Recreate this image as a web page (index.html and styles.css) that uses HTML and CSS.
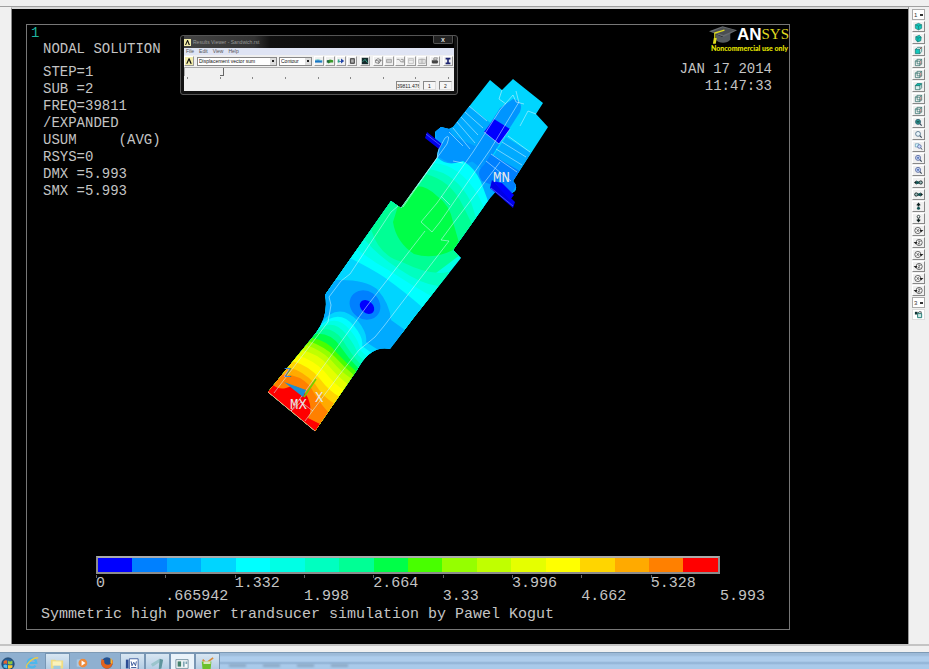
FILE: index.html
```html
<!DOCTYPE html>
<html lang="en">
<head>
    <meta charset="UTF-8">
    <meta name="viewport" content="width=device-width, initial-scale=1.0">
    <title>ANSYS - Nodal Solution</title>
    <link rel="stylesheet" href="styles.css">
</head>
<body>
    <svg class="symbols" aria-hidden="true">
        <symbol id="cube" viewBox="0 0 12 10"><path d="M2.5 3 6 1.5 9.5 3v4L6 8.800 2.500 7z" fill="#12c8bd" stroke="#16766f" stroke-width=".7"/><path d="M2.500 3 6 4.500 9.500 3M6 4.500v4" fill="none" stroke="#16766f" stroke-width=".7"/></symbol>
        <symbol id="cube-tilt" viewBox="0 0 12 10"><path d="M3 3 7 1.500 9 3.500 8.500 7.500 5 8.800 3 6.500z" fill="#12c8bd" stroke="#16766f" stroke-width=".8"/><path d="M3 3 5.500 4.500 9 3.500M5.500 4.500 5 8.500" fill="none" stroke="#16766f" stroke-width=".7"/></symbol>
        <symbol id="box-front" viewBox="0 0 12 10"><path d="M3 3.500 5 1.500h4.500v4.500L7.500 8.500z" fill="#fff" stroke="#16766f" stroke-width=".8"/><path d="M2.500 3.500h5v5h-5z" fill="#12c8bd" stroke="#16766f" stroke-width=".8"/><path d="M7.500 3.500l2-2" stroke="#b33"/></symbol>
        <symbol id="box-wire" viewBox="0 0 12 10"><path d="M2.500 3.500h5v5h-5zM2.500 3.500l2-2h5v5l-2 2M7.500 3.500l2-2M4.500 2v4.500h5" fill="none" stroke="#2c6d69" stroke-width=".8"/><path d="M8.500 3v4" stroke="#c77" stroke-width=".8"/></symbol>
        <symbol id="box-top" viewBox="0 0 12 10"><path d="M2.500 4h5v4.500h-5zM7.500 4l2-2v4.500l-2 2" fill="#d8eeec" stroke="#2c6d69" stroke-width=".8"/><path d="M2.500 4l2-2.300h5L7.500 4z" fill="#12b8ae" stroke="#16766f" stroke-width=".8"/></symbol>
        <symbol id="zoom" viewBox="0 0 12 10"><circle cx="5.500" cy="4.300" r="2.700" fill="#e8f4fa" stroke="#4a6c86" stroke-width=".9"/><path d="M7.500 6.300 9.500 8.500" stroke="#345" stroke-width="1.200"/></symbol>
        <symbol id="zoom-fit" viewBox="0 0 12 10"><circle cx="5.500" cy="4.300" r="2.800" fill="#2b9690" stroke="#345d70" stroke-width=".9"/><path d="M7.500 6.300 9.500 8.500" stroke="#345" stroke-width="1.200"/><path d="M4 4.300h3" stroke="#133"/></symbol>
        <symbol id="zoom-in" viewBox="0 0 12 10"><circle cx="5.500" cy="4.300" r="2.800" fill="#dfeaff" stroke="#4a5c96" stroke-width=".9"/><path d="M7.500 6.300 9.500 8.500" stroke="#345" stroke-width="1.200"/><path d="M4 4.300h3M5.500 2.800v3" stroke="#35a" stroke-width=".9"/></symbol>
        <symbol id="zoom-win" viewBox="0 0 12 10"><path d="M2.500 2h4v3.500h-4z" fill="#dff" stroke="#58a" stroke-width=".7"/><circle cx="7" cy="5" r="2" fill="#cdf" stroke="#4a5c96" stroke-width=".8"/><path d="M8.500 6.500 10 8.500" stroke="#345"/></symbol>
        <symbol id="pan-left" viewBox="0 0 12 10"><path d="M1 5 4 2.500v5z" fill="#122"/><circle cx="5" cy="5" r="1.800" fill="#155"/><circle cx="8.500" cy="5" r="1.800" fill="#9bb" stroke="#122"/></symbol>
        <symbol id="pan-right" viewBox="0 0 12 10"><path d="M11 5 8 2.500v5z" fill="#122"/><circle cx="7" cy="5" r="1.800" fill="#155"/><circle cx="3.500" cy="5" r="1.800" fill="#9bb" stroke="#122"/></symbol>
        <symbol id="pan-up" viewBox="0 0 12 10"><path d="M6 .5 8.500 3.500h-5z" fill="#122"/><path d="M5 3h2v2H5z" fill="#122"/><circle cx="6" cy="7" r="1.700" fill="#155"/></symbol>
        <symbol id="pan-down" viewBox="0 0 12 10"><path d="M6 9.500 8.500 6.500h-5z" fill="#122"/><path d="M5 5h2v2H5z" fill="#122"/><circle cx="6" cy="3" r="1.500" fill="#fff" stroke="#122" stroke-width=".9"/></symbol>
        <symbol id="spin-right" viewBox="0 0 12 10"><circle cx="5.300" cy="5" r="3.400" fill="#fff" stroke="#444" stroke-width=".9"/><path d="M4 3.500 6.500 6.500M6.500 3.500 4 6.500" stroke="#333" stroke-width=".8"/><path d="M7 4.500h4.500L9 7z" fill="#222"/></symbol>
        <symbol id="spin-left" viewBox="0 0 12 10"><circle cx="6.700" cy="5" r="3.400" fill="#fff" stroke="#444" stroke-width=".9"/><path d="M5.500 3.500h2.500L5.500 6.500H8" fill="none" stroke="#333" stroke-width=".8"/><path d="M.5 4.500H5L3 7z" fill="#222"/></symbol>
        <symbol id="dynamic" viewBox="0 0 12 10"><path d="M2 2h3v3H2z" fill="#133"/><path d="M5 4h4.500v4.500H5z" fill="#cfe6e4" stroke="#16766f"/><path d="M5 4l1.500-2H9v2" fill="none" stroke="#455"/></symbol>
        <symbol id="logo-a" viewBox="0 0 10 10"><path d="M0 0h10v10H0z" fill="#f3edaa"/><path d="M1.500 8.500 4.500 1.500h1.200L8.500 8.500H6.700L5 4 3 8.500z" fill="#111"/></symbol>
    </svg>

    <div class="top-strip"></div>

    <div class="workspace">
        <main class="graphics">
            <section class="plot">
                <header class="plot-head">
                    <div class="solution">
                        <div class="plot-number">1</div>
                        <h1>NODAL SOLUTION</h1>
                        <pre class="readout">STEP=1
SUB =2
FREQ=39811
/EXPANDED
USUM     (AVG)
RSYS=0
DMX =5.993
SMX =5.993</pre>
                    </div>
                    <div class="stamp">
                        <div class="brand">
                            <svg class="cap" viewBox="0 0 30 18">
                                <path d="M7 8v6c3 4 12 4 15 0V7l-8 4z" fill="#555b60"/>
                                <path d="M0 5 14 0 29 4 15 11z" fill="#686c70"/>
                                <path d="M3 6l11-5 13 3-12 5z" fill="#4a4e52"/>
                                <path d="M16 4 6 7v9" fill="none" stroke="#e0dc20" stroke-width="1.300"/>
                                <path d="M5 12h3l-1 6H4z" fill="#e0dc20"/>
                            </svg>
                            <span class="brand-an">AN</span><span class="brand-sys">SYS</span>
                        </div>
                        <div class="brand-note">Noncommercial use only</div>
                        <div class="date">JAN 17 2014<br>11:47:33</div>
                    </div>
                </header>

                <svg class="model" viewBox="260 70 300 370" role="img" aria-label="Displacement contour of the transducer">
                    <defs>
                        <clipPath id="body">
                            <path d="M490 80 502 90 513 79 543 103 536 114 548 127 513 181Q518 186 515 191L509 195 497 190 490 198 453 250 461 258 415 316 390 349Q370 345 357 370L315 431 268 392 316 333Q329 315 325 295L391 201 401 208 437 158Q437 150 441 146L435 138V132L441 127 449 129 453 127z"/>
                        </clipPath>
                    </defs>
                    <g clip-path="url(#body)">
                        <path d="M260 70h300v370H260z" fill="#00d5ff"/>
                        <!-- upper stack -->
                        <path d="M469 106 493 125 476 150 530 190 490 205 440 172 425 140 445 120z" fill="#00aaff"/>
                        <path d="M506 137 531 153 510 187 485 168z" fill="#00aaff"/>
                        <path d="M513 99Q524 101 520 112L483 170 468 158 500 108z" fill="#0095ff"/>
                        <path d="M435 125 449 128 453 136 484 150 474 161Q455 169 439 157z" fill="#0095ff"/>
                        <path d="M491 154 523 173 512 193 482 181Q475 172 484 165z" fill="#007fff"/>
                        <path d="M494 119 510 129 499 144 484 132z" fill="#00f"/>
                        <!-- middle -->
                        <path d="M438 158Q447 167 463 161 475 168 481 182L488 201 420 316 340 270 380 170z" fill="#0ff"/>
                        <path d="M434 163Q460 165 478 195L490 220 420 310 350 262 380 170z" fill="#00ffe5"/>
                        <path d="M429 169Q456 173 471 202L480 230 400 300 340 257 380 170z" fill="#00ffc0"/>
                        <path d="M425 174Q451 180 463 206L480 240 400 300 340 257 380 170z" fill="#00ff95"/>
                        <path d="M402 193Q419 178 437 196 450 205 453 222L460 246Q437 261 414 254 396 242 393 222z" fill="#00ff48"/>
                        <path d="M371 229Q379 256 402 262 430 276 448 272L470 290 410 340 320 290z" fill="#00ffc0"/>
                        <path d="M364 239Q378 256 399 269 421 284 438 286L415 340 320 290z" fill="#00ffe5"/>
                        <path d="M357 249Q373 262 390 271 411 285 431 296L415 340 320 290z" fill="#0ff"/>
                        <path d="M350 258Q372 269 384 277 405 292 422 307L410 350 310 310z" fill="#00d5ff"/>
                        <path d="M336 280Q364 279 377 289 390 304 391 320L405 330 385 360 310 340 320 290z" fill="#00aaff"/>
                        <ellipse cx="365" cy="305" rx="16" ry="14" transform="rotate(35 365 305)" fill="#0080ff"/>
                        <ellipse cx="367" cy="307" rx="8" ry="6" transform="rotate(40 367 307)" fill="#00f"/>
                        <!-- nozzle, one band per contour -->
                        <path d="M319 325Q338 300 358 321 368 334 366 342L383 353 320 440 250 400z" fill="#00d5ff"/>
                        <path d="M319 327Q338 307 354 326 364 338 362 346L376 356 320 440 250 400z" fill="#0ff"/>
                        <path d="M318 329Q335 312 350 330 360 342 360 350L371 360 320 440 250 400z" fill="#00ffe5"/>
                        <path d="M317 331Q332 317 346 334 356 346 358 355L367 363 320 440 250 400z" fill="#00ffc0"/>
                        <path d="M316 332Q330 324 342 339 350 353 362 366L320 440 250 400z" fill="#00ff95"/>
                        <path d="M315 334Q330 332 340 346 348 358 359 369L320 440 250 400z" fill="#00ff48"/>
                        <path d="M312 338Q328 341 336 352 346 363 357 372L320 440 250 400z" fill="#48ff00"/>
                        <path d="M309 341Q325 347 334 356 344 367 355 376L320 440 250 400z" fill="#95ff00"/>
                        <path d="M306 345Q321 350 331 360 341 372 352 379L320 440 250 400z" fill="#c0ff00"/>
                        <path d="M302 350Q318 354 328 365 338 377 349 385L320 440 250 400z" fill="#e5ff00"/>
                        <path d="M297 355Q313 360 324 371 334 384 345 391L320 440 250 400z" fill="#ff0"/>
                        <path d="M292 361Q310 366 320 379 330 392 340 397L320 440 250 400z" fill="#ffd500"/>
                        <path d="M287 367Q304 371 315 384 323 397 335 404L320 440 250 400z" fill="#ffaa00"/>
                        <path d="M281 375Q298 373 310 386 318 401 328 412L320 440 250 400z" fill="#ff8000"/>
                        <path d="M273 385Q279 390 286 388 300 382 308 398 313 410 308 418L320 424 315 440 250 400z" fill="#f00"/>
                    </g>
                    <!-- mounting flanges -->
                    <path d="M427 132 442 144 439 149 425 138zM492 180 515 202 513 208 490 188z" fill="#0000e8"/>
                    <path d="M493 181 502 183 514 195 510 200z" fill="#00f"/>
                    <path d="M426 134 440 145M491 188 513 206" stroke="#7a86ff" stroke-width=".6"/>
                    <!-- part outlines -->
                    <g class="edges">
                        <path d="M291 411 367 306 425 231M421 222 432 232 440 222 490 150 519 102M421 222 437 203 473 152 500 110 513 95"/>
                        <path d="M274 393 328 322 331 305 329 297 341 281 350 274 391 212 398 206M305 421 340 374 359 350 375 337 384 326 449 241 441 240 452 225 500 162"/>
                        <path d="M513 95 516 102 524 104M516 91 519 103M502 90 499 99 506 104M536 114 528 111 520 126"/>
                        <path d="M469 106 487 121M465 112 483 128M461 117 478 135M457 122 475 143M453 128 470 149M449 132 463 146"/>
                        <path d="M508 136 530 152M502 142 526 157M496 149 522 165M491 154 517 172M486 161 511 181"/>
                        <path d="M401 208 447 144Q451 133 445 138L439 149 437 158 403 207M441 196 450 205M453 161 463 163M484 132 499 144 510 129"/>
                        <path d="M268 392 315 431M291 411 301 402 313 411"/>
                    </g>
                    <!-- coordinate triad -->
                    <path d="M284 382 306 390 303 397z" fill="#1c8fd0"/>
                    <path d="M304 397 316 379" stroke="#6bd000" stroke-width="1.500"/>
                    <g class="marks">
                        <text class="axis-z" x="284" y="377">Z</text>
                        <text x="315" y="402">X</text>
                        <text x="290" y="409">MX</text>
                        <text x="493" y="182">MN</text>
                    </g>
                </svg>

                <footer class="legend">
                    <div class="scale">
                        <i class="c0"></i><i class="c1"></i><i class="c2"></i><i class="c3"></i><i class="c4"></i><i class="c5"></i>
                        <i class="c6"></i><i class="c7"></i><i class="c8"></i><i class="c9"></i><i class="c10"></i><i class="c11"></i>
                        <i class="c12"></i><i class="c13"></i><i class="c14"></i><i class="c15"></i><i class="c16"></i><i class="c17"></i>
                    </div>
                    <div class="values">
                        <span>0</span><span>.665942</span><span>1.332</span><span>1.998</span><span>2.664</span>
                        <span>3.33</span><span>3.996</span><span>4.662</span><span>5.328</span><span>5.993</span>
                    </div>
                </footer>
                <p class="caption">Symmetric high power trandsucer simulation by Pawel Kogut</p>

                <section class="viewer" aria-label="Results Viewer">
                    <div class="viewer-title">
                        <svg class="viewer-logo"><use href="#logo-a"/></svg>
                        <span>Results Viewer - Sandwich.rst</span>
                        <button class="close" aria-label="Close">x</button>
                    </div>
                    <nav class="viewer-menu">
                        <a href="#">File</a><a href="#">Edit</a><a href="#">View</a><a href="#">Help</a>
                    </nav>
                    <div class="viewer-tools">
                        <button class="tool" aria-label="Element plot"><svg viewBox="0 0 10 10"><use href="#logo-a"/></svg></button>
                        <select class="result-item" aria-label="Result item"><option>Displacement vector sum</option></select>
                        <select class="plot-type" aria-label="Plot type"><option>Contour</option></select>
                        <button class="tool" aria-label="First result"><svg viewBox="0 0 10 10"><path d="M0 4h9v3H0z" fill="#1776c4"/><path d="M0 4l4-1 5 2" stroke="#7cc" fill="none"/></svg></button>
                        <button class="tool" aria-label="Next result"><svg viewBox="0 0 10 10"><path d="M1 5l4-2 4 1v3H6L3 8z" fill="#3a9a2c"/><path d="M1 4h3v3H1z" fill="#264"/></svg></button>
                        <button class="tool" aria-label="Last result"><svg viewBox="0 0 10 10"><path d="M1 5h4V2l4 3-4 3V6H1z" fill="#2346a8"/><path d="M1 3h2v4H1z" fill="#3a8"/></svg></button>
                        <button class="tool" aria-label="List results"><svg viewBox="0 0 10 10"><path d="M3 2h5v6H3z" fill="#777" stroke="#333"/><path d="M4 4h3M4 6h3" stroke="#ddd"/></svg></button>
                        <button class="tool gap" aria-label="Animate"><svg viewBox="0 0 10 10"><path d="M1 1h8v8H1z" fill="#142a2c"/><path d="M2 6 5 3l3 4" stroke="#3fc2a0" fill="none"/></svg></button>
                        <button class="tool gap" aria-label="Query"><svg viewBox="0 0 10 10"><path d="M2 4l3-2 4 2-3 4-4-1zM2 4l4 1 3-1M6 5v3" stroke="#555" fill="none" stroke-width=".8"/></svg></button>
                        <button class="tool" aria-label="Capture"><svg viewBox="0 0 10 10"><path d="M2 3h6v4H2zM2 5h6" stroke="#999" fill="none"/></svg></button>
                        <button class="tool" aria-label="Path"><svg viewBox="0 0 10 10"><path d="M1 3h3l2 3h3M6 3h3v4" stroke="#888" fill="none"/></svg></button>
                        <button class="tool" aria-label="Report"><svg viewBox="0 0 10 10"><path d="M2 2h6v6H2zM2 4h6" stroke="#bbb" fill="none"/></svg></button>
                        <button class="tool" aria-label="Table"><svg viewBox="0 0 10 10"><path d="M1 3h8v5H1zM4 2v6M6 2v6" stroke="#aaa" fill="none"/></svg></button>
                        <button class="tool gap" aria-label="Print"><svg viewBox="0 0 10 10"><path d="M3 3l1-2h4L7 4z" fill="#ddd" stroke="#444" stroke-width=".6"/><path d="M1 4h7l1 2-1 2H2L1 7z" fill="#444"/></svg></button>
                        <button class="tool gap" aria-label="Sum"><svg viewBox="0 0 10 10"><path d="M2 1h6v2H6v4h2v2H2V7h2V3H2z" fill="#1c2470"/></svg></button>
                    </div>
                    <input class="sequence" type="range" min="1" max="9" value="2" aria-label="Result sequence">
                    <div class="ticks"><i></i><i></i><i></i><i></i><i></i><i></i><i></i><i></i><i></i></div>
                    <div class="viewer-status">
                        <input class="freq" type="text" value="39811.476" aria-label="Frequency">
                        <input type="text" value="1" aria-label="Load step">
                        <input type="text" value="2" aria-label="Substep">
                    </div>
                </section>
            </section>
        </main>

        <aside class="view-bar">
            <select aria-label="Active window"><option>1</option></select>
            <button aria-label="Isometric view"><svg><use href="#cube"/></svg></button>
            <button aria-label="Oblique view"><svg><use href="#cube-tilt"/></svg></button>
            <button aria-label="Front view"><svg><use href="#box-front"/></svg></button>
            <button aria-label="Right view"><svg><use href="#box-wire"/></svg></button>
            <button aria-label="Back view"><svg><use href="#box-wire"/></svg></button>
            <button aria-label="Top view"><svg><use href="#box-top"/></svg></button>
            <button aria-label="Left view"><svg><use href="#box-wire"/></svg></button>
            <button aria-label="Bottom view"><svg><use href="#box-wire"/></svg></button>
            <button aria-label="Fit view"><svg><use href="#zoom-fit"/></svg></button>
            <button aria-label="Zoom model"><svg><use href="#zoom"/></svg></button>
            <button aria-label="Window zoom"><svg><use href="#zoom-win"/></svg></button>
            <button aria-label="Zoom in"><svg><use href="#zoom-in"/></svg></button>
            <button aria-label="Zoom out"><svg><use href="#zoom-in"/></svg></button>
            <button aria-label="Pan left"><svg><use href="#pan-left"/></svg></button>
            <button aria-label="Pan right"><svg><use href="#pan-right"/></svg></button>
            <button aria-label="Pan up"><svg><use href="#pan-up"/></svg></button>
            <button aria-label="Pan down"><svg><use href="#pan-down"/></svg></button>
            <button aria-label="Rotate +X"><svg><use href="#spin-right"/></svg></button>
            <button aria-label="Rotate -X"><svg><use href="#spin-left"/></svg></button>
            <button aria-label="Rotate +Y"><svg><use href="#spin-right"/></svg></button>
            <button aria-label="Rotate -Y"><svg><use href="#spin-left"/></svg></button>
            <button aria-label="Rotate +Z"><svg><use href="#spin-right"/></svg></button>
            <button aria-label="Rotate -Z"><svg><use href="#spin-left"/></svg></button>
            <select aria-label="Rotation rate"><option>3</option></select>
            <button class="pressed" aria-label="Dynamic mode"><svg><use href="#dynamic"/></svg></button>
        </aside>
    </div>

    <div class="bottom-strip"></div>

    <nav class="taskbar">
        <button class="start" aria-label="Start"><svg viewBox="0 0 16 16"><circle cx="8" cy="8" r="7" fill="#235c94" stroke="#16395f"/><path d="M3 5q2-2 4-1v4q-2-1-4 0z" fill="#e8622c"/><path d="M8 4q2 2 5 0v4q-3 1-5 0z" fill="#8cc63f"/><path d="M3 9q2-1 4 0v4q-2-1-4-1z" fill="#4fc3f0"/><path d="M8 9q2 1 5 0v3q-3 2-5 1z" fill="#fbc62c"/></svg></button>
        <button aria-label="Internet Explorer"><svg viewBox="0 0 16 16"><path d="M12 11a5 5 0 1 1 1-3H5" fill="none" stroke="#4db8ec" stroke-width="2.500"/><path d="M2 14C0 10 8 2 15 2" fill="none" stroke="#e9c84a" stroke-width="1.500"/></svg></button>
        <button class="open" aria-label="Explorer"><svg viewBox="0 0 16 16"><path d="M1 3h5l1 1h8v9H1z" fill="#f0dc82"/><path d="M3 5h10v5H3z" fill="#fbf2bb"/><path d="M4 10h8v4H4z" fill="#9fcbe0"/></svg></button>
        <button aria-label="Media Player"><svg viewBox="0 0 16 16"><path d="M2 4l8-1v10l-8-1z" fill="#a8c8e4"/><circle cx="9" cy="8" r="5" fill="#ee8a3a"/><path d="M7.500 5 12 8l-4.500 3z" fill="#fff"/></svg></button>
        <button aria-label="Firefox"><svg viewBox="0 0 16 16"><circle cx="8" cy="8" r="6.500" fill="#24518f"/><path d="M2 3q-2 6 1 9 5 5 10 0 3-4 1-8-1 6-5 6-5 0-4-5z" fill="#e3621b"/><path d="M12 2q3 3 2 7l-2-1z" fill="#f8b733"/></svg></button>
        <button class="open" aria-label="Word"><svg viewBox="0 0 16 16"><path d="M5 2h10v12H5z" fill="#fff" stroke="#3b5a9c"/><path d="M1 3h3v10H1z" fill="#2c4c94"/><path d="M7 5l1 5 2-4 2 4 1-5M7 12h6" stroke="#2c4c94" fill="none"/></svg></button>
        <button class="open" aria-label="ANSYS Launcher"><svg viewBox="0 0 16 16"><path d="M1 8 11 2v4l-8 5z" fill="#9bc4cc"/><path d="M11 2l4 1-2 10-3 1z" fill="#5e949c"/></svg></button>
        <button class="open active" aria-label="ANSYS Output"><svg viewBox="0 0 16 16"><path d="M1 3h14v10H1z" fill="#f4f8fa" stroke="#6f8c9c"/><path d="M3 5h4v6H3z" fill="#44806c"/><path d="M9 5h2v6H9zM12 5h2v3h-2z" fill="#7fa6b6"/></svg></button>
        <button class="open" aria-label="Paint"><svg viewBox="0 0 16 16"><path d="M2 5h11l-1 10H3z" fill="#6cc02c"/><path d="M3 3l4 4 8-6" fill="none" stroke="#d98c3c" stroke-width="2"/><path d="M4 5h8v3H4z" fill="#d8e8c0"/></svg></button>
        <span class="ghost"></span><span class="ghost"></span><span class="ghost"></span><span class="ghost"></span>
    </nav>
</body>
</html>
```
FILE: styles.css
```css
* {
    margin: 0;
    padding: 0;
    box-sizing: border-box;
}
body {
    display: flex;
    flex-direction: column;
    height: 100vh;
    overflow: hidden;
    background: #f0f0f0;
    font-family: "Liberation Sans", sans-serif;
}
button,
select,
input {
    appearance: none;
    border: none;
    border-radius: 0;
    font-family: inherit;
}
.symbols {
    position: absolute;
    width: 0;
    height: 0;
}
.top-strip {
    height: 7px;
    border-bottom: 1px solid #a0a0a0;
}
.workspace {
    flex: 1;
    display: flex;
    min-height: 0;
    padding-left: 11px;
}

/* graphics window */
.graphics {
    flex: 1;
    display: flex;
    background: #000;
    border-left: 1px solid #888;
    border-top: 2px solid #d8d8d8;
    padding: 15px 118px 14px 14px;
}
.plot {
    flex: 1;
    position: relative;
    display: flex;
    flex-direction: column;
    border: 1px solid #777;
    color: #c4c4c4;
    font-family: "Liberation Mono", monospace;
    font-size: 14px;
    line-height: 17px;
}
.plot-head {
    flex: 1;
    display: flex;
    justify-content: space-between;
}
.solution {
    padding-left: 16px;
}
.plot-number {
    color: #1fb5a0;
    margin-left: -12px;
}
h1 {
    font-size: 14px;
    font-weight: normal;
    line-height: 14px;
    margin-bottom: 8px;
}
.readout {
    font-family: inherit;
}
.stamp {
    text-align: right;
}
.brand {
    display: flex;
    justify-content: flex-end;
    align-items: center;
    height: 19px;
    font-family: "Liberation Sans", sans-serif;
}
.cap {
    width: 29px;
    height: 18px;
    margin-right: -1px;
}
.brand-an {
    color: #fff;
    font-size: 17px;
    font-weight: bold;
}
.brand-sys {
    color: #e0dc20;
    font-family: "Liberation Serif", serif;
    font-size: 15px;
}
.brand-note {
    color: #e6e600;
    font-family: Lato, sans-serif;
    font-size: 7px;
    font-weight: 900;
    line-height: 9px;
    padding-right: 1px;
}
.date {
    margin-top: 8px;
    padding-right: 17px;
}
.model {
    position: absolute;
    left: 233px;
    top: 45px;
    width: 300px;
    height: 370px;
}
.edges {
    fill: none;
    stroke: #d0f4ff;
    stroke-width: 1;
    stroke-opacity: .55;
}
.marks {
    fill: #e8e8e8;
    font-size: 14px;
}
.axis-z {
    fill: #3c8cd8;
    font-size: 12px;
}

/* contour legend */
.legend {
    margin: 0 69px;
    font-size: 15px;
}
.scale {
    display: flex;
    height: 18px;
    margin-bottom: 1px;
    border: 2px solid #8c8c8c;
    border-top-color: #aaa;
}
.scale i {
    flex: 1;
}
.c0 { background: #0000ff; }
.c1 { background: #0080ff; }
.c2 { background: #00aaff; }
.c3 { background: #00d5ff; }
.c4 { background: #00ffff; }
.c5 { background: #00ffe5; }
.c6 { background: #00ffc0; }
.c7 { background: #00ff95; }
.c8 { background: #00ff48; }
.c9 { background: #48ff00; }
.c10 { background: #95ff00; }
.c11 { background: #c0ff00; }
.c12 { background: #e5ff00; }
.c13 { background: #ffff00; }
.c14 { background: #ffd500; }
.c15 { background: #ffaa00; }
.c16 { background: #ff8000; }
.c17 { background: #ff0000; }
.values {
    display: grid;
    grid-template-columns: repeat(9, 1fr) 0;
}
.values span {
    min-width: 0;
    height: 29px;
    white-space: nowrap;
    background: linear-gradient(#666, #666) no-repeat 0 0 / 1px 3px;
}
.values span:nth-child(even) {
    padding-top: 13px;
}
.caption {
    font-size: 15px;
    padding: 2px 0 6px 14px;
    white-space: nowrap;
}

/* results viewer window */
.viewer {
    position: absolute;
    left: 153px;
    top: 10px;
    width: 278px;
    padding: 0 3px 3px;
    background: #111;
    border: 1px solid #555;
    border-radius: 3px;
    font-family: "Liberation Sans", sans-serif;
    font-size: 5px;
    line-height: 7px;
    color: #222;
}
.viewer-title {
    display: flex;
    align-items: center;
    gap: 2px;
    height: 12px;
    background: linear-gradient(90deg, #444, #333 26%, #111 32%, #000);
    color: #999;
}
.viewer-logo {
    width: 7px;
    height: 7px;
}
.close {
    width: 20px;
    height: 8px;
    margin: 0 1px 4px auto;
    border: 1px solid #555;
    border-top: none;
    border-radius: 0 0 2px 2px;
    background: #222;
    color: #ddd;
    font-size: 7px;
    font-weight: bold;
    line-height: 6px;
}
.viewer-menu {
    display: flex;
    gap: 5px;
    height: 7px;
    padding-left: 2px;
    background: #dfe4f4;
}
.viewer-menu a {
    color: #555;
    text-decoration: none;
}
.viewer-tools {
    display: flex;
    align-items: center;
    gap: 1px;
    height: 12px;
    padding-right: 1px;
    background: #f0f0f0;
}
.tool {
    display: flex;
    flex: none;
    width: 10px;
    height: 10px;
    background: #f0f0f0;
    border: 1px solid #fff;
    border-right-color: #999;
    border-bottom-color: #999;
}
.tool.gap {
    margin-left: 2px;
}
.tool svg {
    width: 100%;
    height: 100%;
}
.viewer-tools select {
    height: 9px;
    padding: 0 1px;
    border: 1px solid #888;
    background:
        linear-gradient(#222, #222) no-repeat right 2px center / 2px 2px,
        linear-gradient(#ddd, #ddd) no-repeat right center / 6px 100%,
        #fff;
    font-size: 5px;
    color: #111;
}
.result-item {
    flex: 1;
    margin-left: 2px;
}
.plot-type {
    width: 33px;
    margin: 0 1px;
}
.sequence {
    display: block;
    width: 100%;
    height: 9px;
    padding: 0 2px;
    background: #f0f0f0;
    border-top: 1px solid #aaa;
    border-left: 1px solid #aaa;
}
.sequence::-webkit-slider-thumb {
    appearance: none;
    width: 4px;
    height: 8px;
    background: #f0f0f0;
    border-right: 1px solid #666;
    border-bottom: 1px solid #666;
}
.ticks {
    display: flex;
    justify-content: space-between;
    height: 5px;
    padding: 1px 5px 2px 3px;
    background: #f0f0f0;
}
.ticks i {
    width: 1px;
    background: #888;
}
.viewer-status {
    display: flex;
    justify-content: flex-end;
    gap: 3px;
    padding: 0 2px 1px;
    background: #f0f0f0;
}
.viewer-status input {
    width: 13px;
    height: 9px;
    border: 1px solid #888;
    border-right-color: #ddd;
    border-bottom-color: #ddd;
    background: #f6f6f6;
    color: #222;
    font-size: 5px;
    text-align: center;
}
.viewer-status .freq {
    width: 24px;
}

/* view control bar */
.view-bar {
    display: flex;
    flex-direction: column;
    align-items: center;
    gap: 1px;
    width: 21px;
    padding: 2px 1px 0 0;
    border-left: 1px solid #999;
}
.view-bar button,
.view-bar select {
    flex: none;
    width: 13px;
    height: 11px;
    background: #f0f0f0;
    border: 1px solid #fff;
    border-right-color: #888;
    border-bottom-color: #888;
}
.view-bar svg {
    display: block;
    width: 11px;
    height: 9px;
}
.view-bar select {
    padding-left: 1px;
    border: 1px solid #aaa;
    background: #fff linear-gradient(#333, #333) no-repeat right 1px center / 3px 2px;
    font-size: 6px;
    color: #333;
}
.view-bar .pressed {
    background: #fff;
    border-color: #ddd;
}

.bottom-strip {
    height: 8px;
    border-top: 2px solid #c4c4c4;
}

/* taskbar */
.taskbar {
    display: flex;
    height: 17px;
    overflow: hidden;
    border-top: 1px solid #7d9ab5;
    background: linear-gradient(#9dbbd9 0 2px, #aecdec 4px 8px, #8fb1d3 10px, #a9caea 12px);
}
.taskbar button {
    flex: none;
    width: 25px;
    height: 20px;
    padding: 1px 5px;
    background: #8fb0d0;
    border-right: 1px solid transparent;
}
.taskbar svg {
    display: block;
    width: 14px;
    height: 14px;
}
.taskbar .start {
    width: 20px;
    padding: 1px 0 0 1px;
}
.taskbar .open {
    background: linear-gradient(#d8e6f2, #aac6e0);
    border: 1px solid #7896b4;
    border-bottom: none;
    padding: 0 4px;
}
.taskbar .active {
    background: #eaf3fa;
}
.ghost {
    width: 17px;
    height: 3px;
    margin: 11px 8px 0 9px;
    background: #8ba9c6;
    filter: blur(1px);
}
```
